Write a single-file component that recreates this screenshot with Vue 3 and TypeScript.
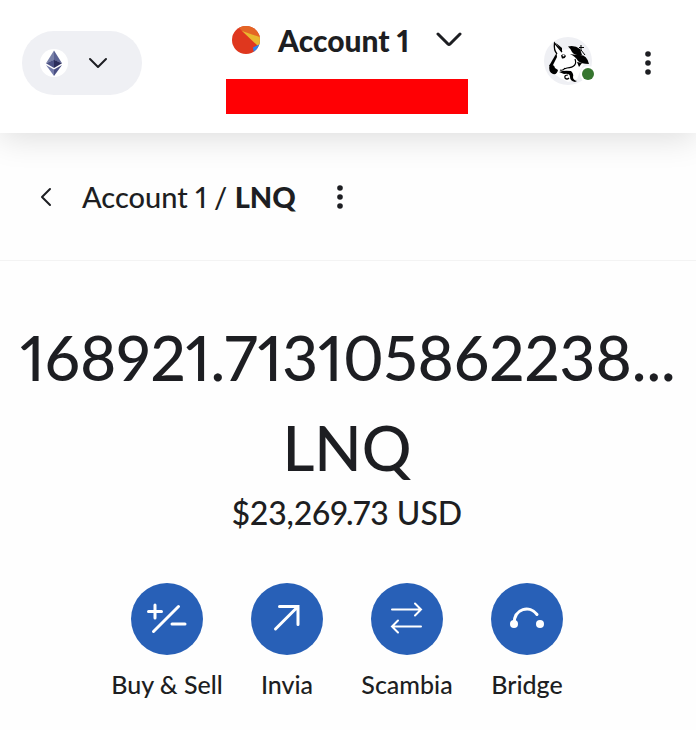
<script setup lang="ts">
import { ref } from 'vue'

interface Action {
  id: string
  label: string
}

const account = ref('Account 1')
const token = ref('LNQ')
const balance = ref('168921.713105862238...')
const fiat = ref('$23,269.73 USD')
const actions: Action[] = [
  { id: 'buy', label: 'Buy & Sell' },
  { id: 'send', label: 'Invia' },
  { id: 'swap', label: 'Scambia' },
  { id: 'bridge', label: 'Bridge' },
]
</script>

<template>
  <div class="wallet">
    <header class="topbar">
      <button class="network" type="button" aria-label="Ethereum">
        <svg class="coin" viewBox="0 0 28 28" aria-hidden="true">
          <circle cx="14" cy="14" r="14" fill="#fff" />
          <path d="M14 1.5 6 14.3 14 11z" fill="#7880a8" />
          <path d="M14 1.5 22 14.3 14 11z" fill="#5a6293" />
          <path d="M6 14.3 14 10.7V19z" fill="#4c5285" />
          <path d="M22 14.3 14 10.7V19z" fill="#2b2d5b" />
          <path d="M6 16 14 20.6V27z" fill="#757caa" />
          <path d="M22 16 14 20.6V27z" fill="#4a4f83" />
        </svg>
        <svg class="chev-small" viewBox="0 0 20 12" aria-hidden="true">
          <path d="M2 2 10 10 18 2" />
        </svg>
      </button>

      <div class="identity">
        <button class="account" type="button">
          <svg class="jazzicon" viewBox="0 0 28 28" aria-hidden="true">
            <defs>
              <clipPath id="disc"><circle cx="14" cy="14" r="14" /></clipPath>
            </defs>
            <g clip-path="url(#disc)">
              <path d="M0 0H28V28H0z" fill="#df371e" />
              <path d="M5 0H28V11L11 6z" fill="#e46525" />
              <path d="M10 5 28 11V18L26 20z" fill="#e9b72f" />
              <path d="M28 18 21 21.500 22 28H28z" fill="#2c83ed" />
            </g>
          </svg>
          <span>{{ account }}</span>
          <svg class="chev-large" viewBox="0 0 26 16" aria-hidden="true">
            <path d="M2 2 12 12Q13 13 14 12L24 2" />
          </svg>
        </button>
        <div class="address"></div>
      </div>

      <div class="tools">
        <button class="site" type="button" aria-label="Uniswap">
          <svg viewBox="0 0 52 48" aria-hidden="true">
            <circle cx="24" cy="24" r="24" fill="#eff0f4" />
            <path d="M10 6 18 13 26 12 34 17 42 24 37 32 33 42 24 45 16 41 9 36 6 31 11 19z" fill="#fff" />
            <path d="M12.500 16 5 29 9 28 13 20z" fill="#000" />
            <path d="M18 15 10.500 6Q9.500 13 13 17" fill="none" stroke="#000" stroke-width="1.300" />
            <path d="M12 6 18 11V15.500z" fill="#000" />
            <path d="M5.500 28Q10 27 11 31L14 33Q13 38 9 37Q4 35 5.500 28z" fill="#000" />
            <path d="M17 18.500Q20 16 22 19Q21 22 18 21.500z" fill="#000" />
            <circle cx="19.500" cy="18.500" r="1" fill="#fff" />
            <path d="M24 9.500Q31 8 36 12L38 18Q31 19 28 15Q27 12 24 9.500z" fill="#000" />
            <path d="M26 17Q31 18 36 18Q43 18 45 27Q37 27 34 24Q32 20 26 17z" fill="#000" />
            <path d="M33 25 38 26 35 30z" fill="#000" />
            <path d="M37 8V14M35 10.500H40M37 13 41 18" fill="none" stroke="#000" stroke-width="1" />
            <path d="M31 22Q34 30 23 31L20 32M16 33Q19 34 21 31" fill="none" stroke="#000" stroke-width="1.200" />
            <path d="M15 35Q20 33 27 34Q30 37 29 40Q29 43 33 44L31 45Q26 44 26 40Q26 36 20 37z" fill="#000" />
            <path d="M24 38Q20 38 21 41Q23 43 25 41" fill="none" stroke="#000" stroke-width="1.200" />
            <circle cx="44" cy="37" r="8" fill="#fff" />
            <circle cx="44" cy="37" r="6" fill="#36752f" />
          </svg>
        </button>
        <button class="more" type="button" aria-label="Menu">
          <svg viewBox="0 0 8 24" aria-hidden="true">
            <circle cx="4" cy="3" r="2.800" /><circle cx="4" cy="12" r="2.800" /><circle cx="4" cy="21" r="2.800" />
          </svg>
        </button>
      </div>
    </header>

    <main>
      <nav class="crumbs">
        <button class="back" type="button" aria-label="Back">
          <svg viewBox="0 0 12 20" aria-hidden="true"><path d="M10 2 2 10 10 18" /></svg>
        </button>
        <p>{{ account }} / <strong>{{ token }}</strong></p>
        <button class="more" type="button" aria-label="Options">
          <svg viewBox="0 0 8 24" aria-hidden="true">
            <circle cx="4" cy="3" r="2.800" /><circle cx="4" cy="12" r="2.800" /><circle cx="4" cy="21" r="2.800" />
          </svg>
        </button>
      </nav>

      <section class="overview">
        <h1>
          <span>{{ balance }}</span>
          <span>{{ token }}</span>
        </h1>
        <p class="fiat">{{ fiat }}</p>
        <div class="actions">
          <button v-for="action in actions" :key="action.id" class="action" type="button">
            <span class="disc">
              <svg viewBox="0 0 72 72" aria-hidden="true">
                <path v-if="action.id === 'buy'" d="M17.500 28.500H30.500M24 22V35M22.500 48.500 47.500 23.500M41 41H54" stroke-width="3" />
                <path v-else-if="action.id === 'send'" d="M24.500 46 47 23.500M28.500 23.500H47V41.500" stroke-width="3" />
                <path v-else-if="action.id === 'swap'" d="M21 26.500H50M44 20.500 50 26.500 44 32.500M50 43.500H21M27 37.500 21 43.500 27 49.500" stroke-width="2" />
                <g v-else>
                  <path d="M23 41C23 25 39 22 46 31.500" stroke-width="3" />
                  <circle cx="23" cy="41" r="4" /><circle cx="49" cy="41" r="4" />
                </g>
              </svg>
            </span>
            <span class="label">{{ action.label }}</span>
          </button>
        </div>
      </section>
    </main>
  </div>
</template>

<style>
body {
  background: #fefefe;
}
</style>

<style scoped>
.wallet {
  color: #1d1e22;
  font-family: Lato, "Liberation Sans", sans-serif;
  font-weight: 500;
  font-variant-numeric: proportional-nums;
}

button {
  padding: 0;
  border: 0;
  background: none;
  color: inherit;
  font: inherit;
  font-variant-numeric: inherit;
  cursor: pointer;
}

svg {
  display: block;
  flex: none;
}

p,
h1 {
  margin: 0;
}

.topbar {
  position: relative;
  display: grid;
  grid-template-columns: 1fr auto 1fr;
  align-items: start;
  padding: 19px 24px 19px 22px;
  background: #fff;
  box-shadow: 0 4px 32px rgba(0, 0, 0, 0.14);
}

.network {
  display: flex;
  align-items: center;
  gap: 20px;
  width: 120px;
  height: 64px;
  margin-top: 12px;
  padding-left: 18px;
  border-radius: 32px;
  background: #eff0f4;
}

.coin,
.jazzicon {
  width: 28px;
  height: 28px;
}

.chev-small,
.chev-large,
.back svg {
  fill: none;
  stroke: #1d1e22;
  stroke-width: 2;
  stroke-linecap: round;
  stroke-linejoin: round;
}

.chev-small {
  width: 20px;
  height: 12px;
}

.chev-large {
  width: 26px;
  height: 16px;
  margin-left: auto;
  stroke-width: 3;
}

.identity {
  display: flex;
  flex-direction: column;
  align-items: center;
  gap: 18px;
  width: 242px;
}

.account {
  display: flex;
  align-items: center;
  gap: 18px;
  width: 230px;
  height: 42px;
  font-size: 30px;
  line-height: 36px;
  font-weight: 900;
}

.address {
  width: 100%;
  height: 35px;
  background: #ff0004;
}

.tools {
  display: flex;
  align-items: center;
  justify-content: flex-end;
  gap: 48px;
  margin-top: 18px;
  padding-right: 20px;
}

.site svg {
  width: 52px;
  height: 48px;
}

.more svg {
  width: 8px;
  height: 24px;
  fill: #1d1e22;
}

.tools .more {
  padding-top: 4px;
}

.crumbs {
  display: flex;
  align-items: center;
  height: 127px;
  padding: 0 40px;
  border-bottom: 1px solid #f3f3f3;
  font-size: 29px;
  line-height: 36px;
}

.crumbs strong {
  font-weight: 900;
}

.back {
  margin-right: 30px;
}

.back svg {
  width: 12px;
  height: 20px;
}

.crumbs .more {
  margin-left: 40px;
}

.overview {
  padding: 51px 22px 32px 20px;
  text-align: center;
}

h1 {
  font-size: 62px;
  font-weight: 500;
  line-height: 90px;
}

h1 span {
  display: block;
  white-space: nowrap;
}

.fiat {
  font-size: 32px;
  line-height: 42px;
}

.actions {
  display: flex;
  justify-content: center;
  margin-top: 49px;
}

.action {
  display: flex;
  flex-direction: column;
  align-items: center;
  gap: 13px;
  width: 120px;
}

.disc {
  width: 72px;
  height: 72px;
  border-radius: 50%;
  background: #2860b7;
}

.disc svg {
  width: 72px;
  height: 72px;
  fill: none;
  stroke: #fff;
  stroke-linecap: round;
}

.disc circle {
  fill: #fff;
  stroke: none;
}

.label {
  font-size: 25px;
  line-height: 32px;
  white-space: nowrap;
}
</style>
